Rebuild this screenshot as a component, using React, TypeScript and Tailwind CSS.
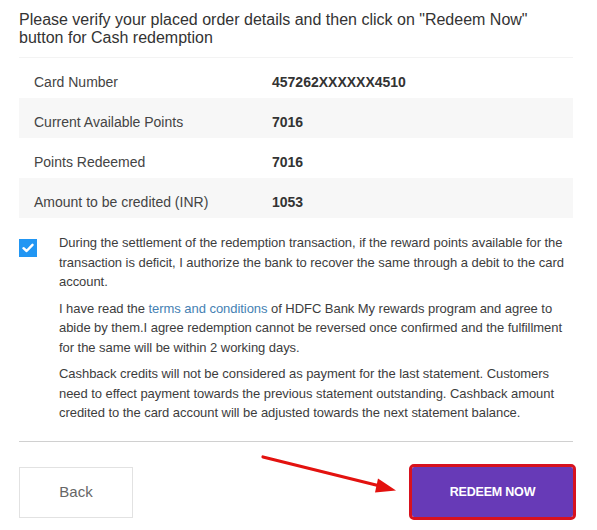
import React, { useState } from 'react';

const rows = [
  { label: 'Card Number', value: '457262XXXXXX4510' },
  { label: 'Current Available Points', value: '7016' },
  { label: 'Points Redeemed', value: '7016' },
  { label: 'Amount to be credited (INR)', value: '1053' },
];

const App: React.FC = () => {
  const [agreed, setAgreed] = useState(true);

  return (
    <div className="relative w-[597px] h-[530px] bg-white overflow-hidden" style={{ fontFamily: '"Liberation Sans", Arial, sans-serif' }}>
      <div className="pl-[19px] pr-[24px] pt-[11px]">
        <h2 className="text-[16px] leading-[18px] text-[#333] font-normal">
          Please verify your placed order details and then click on "Redeem Now" button for Cash redemption
        </h2>

        <div className="mt-[10px] border-t border-[#f3f3f3]">
          {rows.map((r, i) => (
            <div key={r.label} className={`flex items-center h-[40px] pt-[9px] text-[14px] ${i % 2 === 1 ? 'bg-[#f7f7f7]' : 'bg-white'}`}>
              <span className="w-[253px] pl-[15px] text-[#444]">{r.label}</span>
              <span className="font-bold text-[#333]">{r.value}</span>
            </div>
          ))}
        </div>

        <div className="flex mt-[15px]">
          <button
            onClick={() => setAgreed(!agreed)}
            className={`shrink-0 w-[18px] h-[18px] mt-[6px] flex items-center justify-center ${agreed ? 'bg-[#2196f3]' : 'bg-white border border-[#999]'}`}
          >
            {agreed && (
              <svg width="12" height="10" viewBox="0 0 12 10">
                <path d="M1.5 5.2 L4.6 8 L10.5 1.8" fill="none" stroke="white" strokeWidth="2.4" strokeLinecap="round" strokeLinejoin="round" />
              </svg>
            )}
          </button>
          <div className="ml-[22px] text-[13px] leading-[19.5px] tracking-[-0.05px] text-[#3d3d3d]">
            <p>
              During the settlement of the redemption transaction, if the reward points available for the transaction is deficit, I authorize the bank to recover the same through a debit to the card account.
            </p>
            <p className="mt-[7px]">
              I have read the <a className="text-[#4581b3]">terms and conditions</a> of HDFC Bank My rewards program and agree to abide by them.I agree redemption cannot be reversed once confirmed and the fulfillment for the same will be within 2 working days.
            </p>
            <p className="mt-[7px]">
              Cashback credits will not be considered as payment for the last statement. Customers need to effect payment towards the previous statement outstanding. Cashback amount credited to the card account will be adjusted towards the next statement balance.
            </p>
          </div>
        </div>

        <div className="mt-[18px] border-t border-[#d0d0d0]" />

        <div className="flex justify-between items-center mt-[25px]">
          <button className="w-[114px] h-[51px] border border-[#e2e2e2] bg-white text-[15px] text-[#666]">Back</button>
          <button className="w-[161px] h-[50px] bg-[#673ab7] text-white text-[12.5px] font-bold tracking-[-0.2px] outline-[3px] outline-solid outline-[#d7121f] rounded-[2px]">
            REDEEM NOW
          </button>
        </div>
      </div>

      {/* annotation arrow */}
      <svg className="absolute left-0 top-0 pointer-events-none" width="597" height="530">
        <line x1="263" y1="457" x2="382" y2="486.5" stroke="#e3120f" strokeWidth="3.2" strokeLinecap="round" />
        <polygon points="396,490.5 378,478.5 375,492.5" fill="#e3120f" />
      </svg>
    </div>
  );
};

export default App;
